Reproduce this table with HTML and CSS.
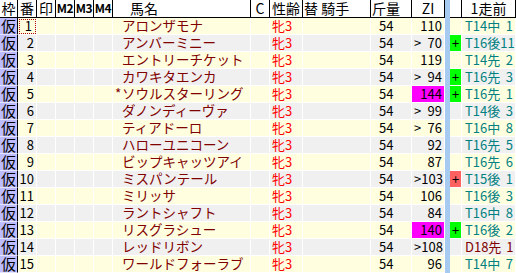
FILE: index.html
```html
<!DOCTYPE html>
<html lang="ja">
<head>
<meta charset="utf-8">
<title>出馬表</title>
<link rel="stylesheet" href="styles.css">
</head>
<body>
<div class="sheet">
  <div class="row head">
    <div class="c waku">枠</div>
    <div class="c ctr">番</div>
    <div class="c ctr">印</div>
    <div class="c ctr m">M2</div>
    <div class="c ctr m">M3</div>
    <div class="c ctr m">M4</div>
    <div class="c hname">馬名</div>
    <div class="c ctr">C</div>
    <div class="c sex">性齢</div>
    <div class="c jockey">替&nbsp;騎手</div>
    <div class="c kin hk">斤量</div>
    <div class="c ctr">ZI</div>
    <div class="bar"></div>
    <div class="c mark"></div>
    <div class="c ctr">1走前</div>
  </div>

  <div class="row odd">
    <div class="c waku">仮</div><div class="c ban sel">1</div>
    <div class="c"></div><div class="c"></div><div class="c"></div><div class="c"></div>
    <div class="c name"><span class="mk"></span>アロンザモナ</div>
    <div class="c"></div><div class="c sex">牝3</div><div class="c"></div>
    <div class="c kin">54</div><div class="c zi"><span class="gt"></span><span>110</span></div>
    <div class="bar"></div><div class="c mark"></div>
    <div class="c prev t"><span>T14中</span><span class="pos">1</span></div>
  </div>

  <div class="row even">
    <div class="c waku">仮</div><div class="c ban">2</div>
    <div class="c"></div><div class="c"></div><div class="c"></div><div class="c"></div>
    <div class="c name"><span class="mk"></span>アンバーミニー</div>
    <div class="c"></div><div class="c sex">牝3</div><div class="c"></div>
    <div class="c kin">54</div><div class="c zi"><span class="gt">&gt;</span><span>70</span></div>
    <div class="bar"></div><div class="c mark plus">+</div>
    <div class="c prev t"><span>T16後</span><span class="pos">11</span></div>
  </div>

  <div class="row odd">
    <div class="c waku">仮</div><div class="c ban">3</div>
    <div class="c"></div><div class="c"></div><div class="c"></div><div class="c"></div>
    <div class="c name"><span class="mk"></span>エントリーチケット</div>
    <div class="c"></div><div class="c sex">牝3</div><div class="c"></div>
    <div class="c kin">54</div><div class="c zi"><span class="gt"></span><span>119</span></div>
    <div class="bar"></div><div class="c mark"></div>
    <div class="c prev t"><span>T14先</span><span class="pos">2</span></div>
  </div>

  <div class="row even">
    <div class="c waku">仮</div><div class="c ban">4</div>
    <div class="c"></div><div class="c"></div><div class="c"></div><div class="c"></div>
    <div class="c name"><span class="mk"></span>カワキタエンカ</div>
    <div class="c"></div><div class="c sex">牝3</div><div class="c"></div>
    <div class="c kin">54</div><div class="c zi"><span class="gt">&gt;</span><span>94</span></div>
    <div class="bar"></div><div class="c mark plus">+</div>
    <div class="c prev t"><span>T16先</span><span class="pos">3</span></div>
  </div>

  <div class="row odd">
    <div class="c waku">仮</div><div class="c ban">5</div>
    <div class="c"></div><div class="c"></div><div class="c"></div><div class="c"></div>
    <div class="c name"><span class="mk">*</span>ソウルスターリング</div>
    <div class="c"></div><div class="c sex">牝3</div><div class="c"></div>
    <div class="c kin">54</div><div class="c zi hot"><span class="gt"></span><span>144</span></div>
    <div class="bar"></div><div class="c mark plus">+</div>
    <div class="c prev t"><span>T16先</span><span class="pos">1</span></div>
  </div>

  <div class="row even">
    <div class="c waku">仮</div><div class="c ban">6</div>
    <div class="c"></div><div class="c"></div><div class="c"></div><div class="c"></div>
    <div class="c name"><span class="mk"></span>ダノンディーヴァ</div>
    <div class="c"></div><div class="c sex">牝3</div><div class="c"></div>
    <div class="c kin">54</div><div class="c zi"><span class="gt">&gt;</span><span>99</span></div>
    <div class="bar"></div><div class="c mark"></div>
    <div class="c prev t"><span>T14後</span><span class="pos">3</span></div>
  </div>

  <div class="row odd">
    <div class="c waku">仮</div><div class="c ban">7</div>
    <div class="c"></div><div class="c"></div><div class="c"></div><div class="c"></div>
    <div class="c name"><span class="mk"></span>ティアドーロ</div>
    <div class="c"></div><div class="c sex">牝3</div><div class="c"></div>
    <div class="c kin">54</div><div class="c zi"><span class="gt">&gt;</span><span>76</span></div>
    <div class="bar"></div><div class="c mark"></div>
    <div class="c prev t"><span>T16中</span><span class="pos">8</span></div>
  </div>

  <div class="row even">
    <div class="c waku">仮</div><div class="c ban">8</div>
    <div class="c"></div><div class="c"></div><div class="c"></div><div class="c"></div>
    <div class="c name"><span class="mk"></span>ハローユニコーン</div>
    <div class="c"></div><div class="c sex">牝3</div><div class="c"></div>
    <div class="c kin">54</div><div class="c zi"><span class="gt"></span><span>92</span></div>
    <div class="bar"></div><div class="c mark"></div>
    <div class="c prev t"><span>T16先</span><span class="pos">5</span></div>
  </div>

  <div class="row odd">
    <div class="c waku">仮</div><div class="c ban">9</div>
    <div class="c"></div><div class="c"></div><div class="c"></div><div class="c"></div>
    <div class="c name"><span class="mk"></span>ビップキャッツアイ</div>
    <div class="c"></div><div class="c sex">牝3</div><div class="c"></div>
    <div class="c kin">54</div><div class="c zi"><span class="gt"></span><span>87</span></div>
    <div class="bar"></div><div class="c mark"></div>
    <div class="c prev t"><span>T16先</span><span class="pos">6</span></div>
  </div>

  <div class="row even">
    <div class="c waku">仮</div><div class="c ban">10</div>
    <div class="c"></div><div class="c"></div><div class="c"></div><div class="c"></div>
    <div class="c name"><span class="mk"></span>ミスパンテール</div>
    <div class="c"></div><div class="c sex">牝3</div><div class="c"></div>
    <div class="c kin">54</div><div class="c zi"><span class="gt">&gt;</span><span>103</span></div>
    <div class="bar"></div><div class="c mark minus">+</div>
    <div class="c prev t"><span>T15後</span><span class="pos">1</span></div>
  </div>

  <div class="row odd">
    <div class="c waku">仮</div><div class="c ban">11</div>
    <div class="c"></div><div class="c"></div><div class="c"></div><div class="c"></div>
    <div class="c name"><span class="mk"></span>ミリッサ</div>
    <div class="c"></div><div class="c sex">牝3</div><div class="c"></div>
    <div class="c kin">54</div><div class="c zi"><span class="gt"></span><span>106</span></div>
    <div class="bar"></div><div class="c mark"></div>
    <div class="c prev t"><span>T16後</span><span class="pos">3</span></div>
  </div>

  <div class="row even">
    <div class="c waku">仮</div><div class="c ban">12</div>
    <div class="c"></div><div class="c"></div><div class="c"></div><div class="c"></div>
    <div class="c name"><span class="mk"></span>ラントシャフト</div>
    <div class="c"></div><div class="c sex">牝3</div><div class="c"></div>
    <div class="c kin">54</div><div class="c zi"><span class="gt"></span><span>84</span></div>
    <div class="bar"></div><div class="c mark"></div>
    <div class="c prev t"><span>T16中</span><span class="pos">8</span></div>
  </div>

  <div class="row odd">
    <div class="c waku">仮</div><div class="c ban">13</div>
    <div class="c"></div><div class="c"></div><div class="c"></div><div class="c"></div>
    <div class="c name"><span class="mk"></span>リスグラシュー</div>
    <div class="c"></div><div class="c sex">牝3</div><div class="c"></div>
    <div class="c kin">54</div><div class="c zi hot"><span class="gt"></span><span>140</span></div>
    <div class="bar"></div><div class="c mark plus">+</div>
    <div class="c prev t"><span>T16後</span><span class="pos">2</span></div>
  </div>

  <div class="row even">
    <div class="c waku">仮</div><div class="c ban">14</div>
    <div class="c"></div><div class="c"></div><div class="c"></div><div class="c"></div>
    <div class="c name"><span class="mk"></span>レッドリボン</div>
    <div class="c"></div><div class="c sex">牝3</div><div class="c"></div>
    <div class="c kin">54</div><div class="c zi"><span class="gt">&gt;</span><span>108</span></div>
    <div class="bar"></div><div class="c mark"></div>
    <div class="c prev d"><span>D18先</span><span class="pos">1</span></div>
  </div>

  <div class="row odd">
    <div class="c waku">仮</div><div class="c ban">15</div>
    <div class="c"></div><div class="c"></div><div class="c"></div><div class="c"></div>
    <div class="c name"><span class="mk"></span>ワールドフォーラブ</div>
    <div class="c"></div><div class="c sex">牝3</div><div class="c"></div>
    <div class="c kin">54</div><div class="c zi"><span class="gt"></span><span>96</span></div>
    <div class="bar"></div><div class="c mark"></div>
    <div class="c prev t"><span>T14中</span><span class="pos">7</span></div>
  </div>
</div>
</body>
</html>
```

FILE: styles.css
```css
* { box-sizing: border-box; }
html, body { margin: 0; padding: 0; background: #ffffff; }
body {
  font-family: "Noto Sans CJK JP", "Noto Sans", sans-serif;
  font-size: 13px;
  color: #000;
}
.sheet { width: 516px; overflow: hidden; }

.row {
  display: grid;
  grid-template-columns: 18px 19px 19px 19px 19px 19px 138px 19px 33px 68px 41px 33px 5px 12px 54px;
  height: 17px;
  line-height: 15px;
  white-space: nowrap;
}
.row.head { height: 18px; background: #ffffff; font-size: 14px; }
.row.odd { background: #ffffe0; }
.row.even { background: #f0f0f0; }

.c {
  border-right: 1px solid #ffffff;
  border-bottom: 1px solid #ffffff;
}
.head .c {
  border-right: 1px solid #000;
  border-bottom: 1px solid #000;
  line-height: 16px;
}
.ctr { text-align: center; }
.head .m { font-size: 12px; letter-spacing: -0.5px; font-weight: 700; }

.bar { background: #a6caf0; }

.waku {
  text-align: center;
  border-right: 1px solid #000;
  font-size: 15px;
}
.row .waku { background: #bcbcff; border-bottom: 1px solid #e4e4ff; }
.head .waku { background: #fff; border-bottom: 1px solid #000; font-size: 14px; }

.ban { text-align: right; padding-right: 2px; }
.ban.sel {
  outline: 1px dotted #b00000;
  outline-offset: -2px;
  padding-right: 4px;
}

.hname { padding-left: 17px; }
.name { color: #800000; padding-left: 2px; font-size: 13.5px; }
.mk { display: inline-block; width: 7px; }

.sex { padding-left: 2px; color: #ff0000; }
.head .sex { color: #000; }
.jockey { padding-left: 1px; }

.kin { padding-left: 8px; }
.head .kin { padding-left: 1px; }

.zi {
  display: flex;
  justify-content: space-between;
  padding: 0 2px 0 2px;
}
.zi.hot { background: #ff00ff; }

.mark { text-align: center; }
.mark.plus { background: #00ff00; }
.mark.minus { background: #ff6060; }

.prev { display: flex; padding-left: 3px; }
.prev .pos { margin-left: auto; min-width: 14px; text-align: right; padding-right: 2px; }
.prev.t { color: #008080; }
.prev.d { color: #800000; }
```
